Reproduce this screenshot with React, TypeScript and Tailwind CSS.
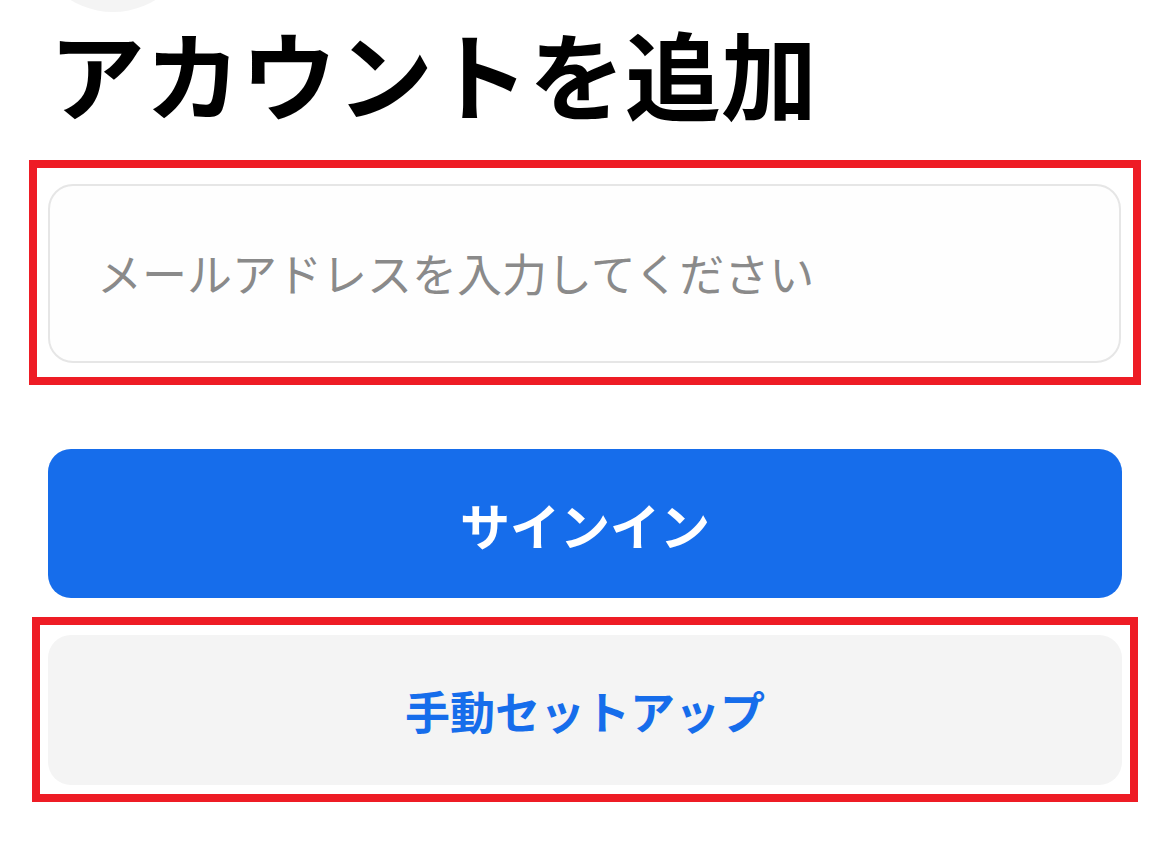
import React from "react";

export default function App() {
  return (
    <div
      className="relative w-[1157px] h-[865px] overflow-hidden bg-white"
      style={{ fontFamily: '"Noto Sans CJK JP", "Noto Sans", sans-serif' }}
    >
      <div className="absolute left-[32px] top-[-150px] w-[162px] h-[162px] rounded-full bg-[#f4f4f4]" />
      <div className="relative flex flex-col pt-[24px] pl-[48px] pr-[35px]">
        <h1 className="ml-[1px] text-[96px] leading-[96px] font-bold text-black">
          アカウントを追加
        </h1>
        <div className="mt-[40px] ml-[-19px] mr-[-19px] border-8 border-[#ee1c25] pl-[11px] pr-[12px] pt-[16px] pb-[14px]">
          <div className="h-[179px] rounded-[25px] border-2 border-[#e6e6e6] bg-[#fefefe] flex items-center pl-[47px]">
            <span className="text-[45px] text-[#8a8a8a] leading-none mt-[-3px]">
              メールアドレスを入力してください
            </span>
          </div>
        </div>
        <button className="mt-[64px] h-[149px] rounded-[23px] bg-[#166deb] flex items-center justify-center">
          <span className="text-[50px] font-bold text-white leading-none">サインイン</span>
        </button>
        <div className="mt-[19px] ml-[-16px] mr-[-16px] border-8 border-[#ee1c25] px-[8px] pt-[10px] pb-[9px]">
          <button className="w-full h-[150px] rounded-[23px] bg-[#f4f4f4] flex items-center justify-center">
            <span className="text-[45px] font-bold text-[#166deb] leading-none">手動セットアップ</span>
          </button>
        </div>
      </div>
    </div>
  );
}
